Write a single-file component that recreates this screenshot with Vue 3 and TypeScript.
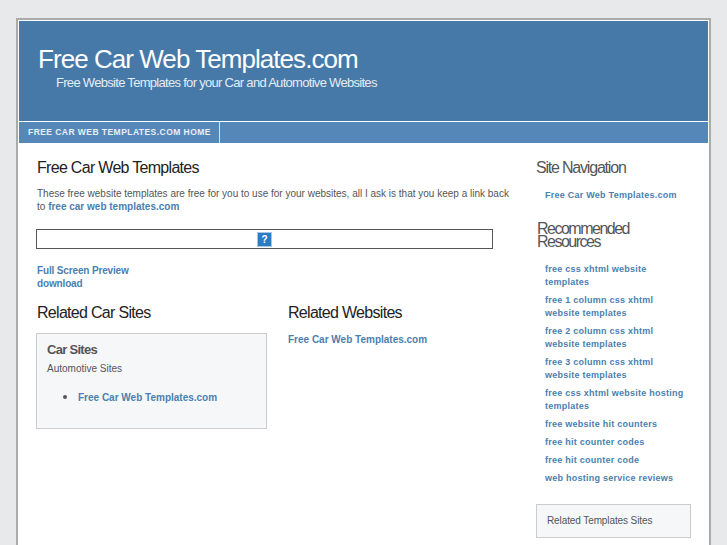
<script setup lang="ts">
const resources: string[] = [
  'free css xhtml website templates',
  'free 1 column css xhtml website templates',
  'free 2 column css xhtml website templates',
  'free 3 column css xhtml website templates',
  'free css xhtml website hosting templates',
  'free website hit counters',
  'free hit counter codes',
  'free hit counter code',
  'web hosting service reviews'
]
</script>

<template>
  <div class="page">
    <div class="wrap">
      <header class="banner">
        <h1>Free Car Web Templates.com</h1>
        <h2>Free Website Templates for your Car and Automotive Websites</h2>
      </header>
      <nav class="topnav">
        <a class="tab" href="#">FREE CAR WEB TEMPLATES.COM HOME</a>
      </nav>
      <div class="body">
        <main class="main">
          <h3 class="title">Free Car Web Templates</h3>
          <p class="intro">
            These free website templates are free for you to use for your websites, all I ask is that you keep a link back to
            <a href="#">free car web templates.com</a>
          </p>
          <div class="frame">
            <svg class="missing" width="15" height="15" viewBox="0 0 15 15">
              <rect x="0.5" y="0.5" width="14" height="14" fill="#2a7cc4" stroke="#a9c6e4" />
              <text x="7.5" y="11" text-anchor="middle" class="qmark">?</text>
            </svg>
          </div>
          <div class="links">
            <a href="#">Full Screen Preview</a>
            <a href="#">download</a>
          </div>
          <div class="columns">
            <section class="col">
              <h3 class="title">Related Car Sites</h3>
              <div class="box">
                <h4>Car Sites</h4>
                <p>Automotive Sites</p>
                <ul>
                  <li><a href="#">Free Car Web Templates.com</a></li>
                </ul>
              </div>
            </section>
            <section class="col">
              <h3 class="title">Related Websites</h3>
              <a class="plain" href="#">Free Car Web Templates.com</a>
            </section>
          </div>
        </main>
        <aside class="side">
          <h3 class="side-title first">Site Navigation</h3>
          <a class="side-link nav-link" href="#">Free Car Web Templates.com</a>
          <h3 class="side-title second">Recommended Resources</h3>
          <ul class="side-list">
            <li v-for="r in resources" :key="r"><a class="side-link" href="#">{{ r }}</a></li>
          </ul>
          <div class="side-box">Related Templates Sites</div>
        </aside>
      </div>
    </div>
  </div>
</template>

<style>
html,
body {
  margin: 0;
  background: #e8e9eb;
}
</style>

<style scoped>
.page {
  height: 545px;
  overflow: hidden;
  padding: 18px 16px 0 16px;
  box-sizing: border-box;
  font-family: "Liberation Sans", Arial, sans-serif;
  color: #555;
}

.wrap {
  width: 695px;
  box-sizing: border-box;
  height: 600px;
  border: 2px solid #aaa;
  padding: 1px;
  background: #fff;
}

a {
  color: #4a7fb0;
  font-weight: bold;
  text-decoration: none;
}

.banner {
  height: 100px;
  box-sizing: border-box;
  background: #4679a8;
  color: #fff;
  padding: 21px 0 0 19px;
}

.banner h1 {
  margin: 0;
  font-size: 26px;
  line-height: 34px;
  font-weight: normal;
  letter-spacing: -0.95px;
}

.banner h2 {
  margin: -2px 0 0 18px;
  font-size: 13px;
  line-height: 18px;
  font-weight: normal;
  letter-spacing: -0.7px;
  color: #e4ecf4;
}

.topnav {
  margin-top: 1px;
  height: 21px;
  background: #5588b9;
  display: flex;
}

.tab {
  box-sizing: border-box;
  width: 201px;
  color: #e8eff6;
  font-size: 8.5px;
  line-height: 21px;
  letter-spacing: 0.45px;
  padding-left: 9px;
  border-right: 1px solid #d5e2ef;
  white-space: nowrap;
}

.body {
  display: flex;
}

.main {
  width: 474px;
  padding: 15px 0 0 18px;
  box-sizing: border-box;
  flex: none;
}

.title {
  margin: 0;
  color: #222;
  font-size: 16px;
  line-height: 20px;
  font-weight: normal;
  letter-spacing: -0.7px;
}

.intro {
  margin: 9px 0 0;
  font-size: 10px;
  line-height: 13px;
  width: 478px;
}

.frame {
  margin: 16px 0 0 -1px;
  width: 457px;
  height: 20px;
  box-sizing: border-box;
  border: 1px solid #555;
  display: flex;
  align-items: center;
  justify-content: center;
}

.missing {
  display: block;
}

.qmark {
  font-size: 10px;
  font-weight: bold;
  fill: #fff;
}

.links {
  margin-top: 15px;
  display: flex;
  flex-direction: column;
  font-size: 10px;
  line-height: 13px;
  letter-spacing: -0.15px;
}

.columns {
  display: flex;
  margin-top: 13px;
}

.col {
  width: 251px;
  flex: none;
}

.box {
  margin: 10px 0 0 -1px;
  width: 231px;
  height: 96px;
  box-sizing: border-box;
  border: 1px solid #ccc;
  background: #f6f7f9;
  padding: 8px 10px;
}

.box h4 {
  margin: 0;
  font-size: 13px;
  line-height: 16px;
  letter-spacing: -0.7px;
  color: #555;
}

.box p {
  margin: 4px 0 0;
  font-size: 10px;
  line-height: 14px;
}

.box ul {
  margin: 13px 0 0;
  padding-left: 31px;
  font-size: 10px;
  line-height: 14px;
}

.box li::marker {
  font-size: 14px;
}

.plain {
  display: block;
  margin-top: 10px;
  font-size: 10px;
  line-height: 14px;
}

.side {
  flex: none;
  width: 170px;
  margin-left: 43px;
  padding-top: 15px;
}

.side-title {
  margin: 0;
  font-size: 16px;
  line-height: 13px;
  font-weight: normal;
  letter-spacing: -1.2px;
  color: #555;
}

.first {
  line-height: 20px;
}

.second {
  margin: 20px 0 0 1px;
  width: 110px;
  letter-spacing: -1.5px;
}

.side-link {
  font-size: 9px;
  line-height: 13px;
  letter-spacing: 0.25px;
}

.nav-link {
  display: block;
  margin: 11px 0 0 9px;
}

.side-list {
  list-style: none;
  margin: 15px 0 0 9px;
  padding: 0;
}

.side-list li {
  margin-bottom: 5px;
  font-size: 9px;
  line-height: 13px;
  width: 142px;
}

.side-box {
  margin-top: 19px;
  width: 155px;
  height: 34px;
  box-sizing: border-box;
  border: 1px solid #ccc;
  background: #f6f7f9;
  font-size: 10px;
  line-height: 32px;
  padding-left: 10px;
  letter-spacing: -0.1px;
}
</style>
